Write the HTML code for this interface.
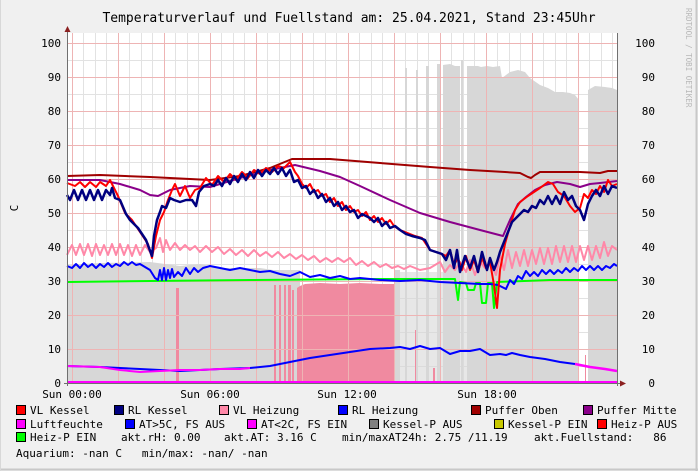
<!DOCTYPE html>
<html><head><meta charset="utf-8"><style>
html,body{margin:0;padding:0;background:#f0f0f0;}
svg{display:block;}
text{font-family:"DejaVu Sans Mono","Liberation Mono",monospace;fill:#000;white-space:pre;}
</style></head><body>
<svg width="698" height="471" viewBox="0 0 698 471" xmlns="http://www.w3.org/2000/svg" xml:space="preserve">
<rect x="0" y="0" width="698" height="471" fill="#f0f0f0"/>
<line x1="696.5" y1="0" x2="696.5" y2="471" stroke="#c8c8c8" stroke-width="2"/>
<line x1="0" y1="469.5" x2="698" y2="469.5" stroke="#c8c8c8" stroke-width="2"/>
<line x1="0.5" y1="0" x2="0.5" y2="471" stroke="#d8d8d8"/>
<rect x="67" y="33" width="550" height="350" fill="#fff"/>
<text x="349" y="22" font-size="13" text-anchor="middle">Temperaturverlauf und Fuellstand am: 25.04.2021, Stand 23:45Uhr</text>
<text x="686" y="8" font-size="7.5" style="fill:#b8b8b8" transform="rotate(90 686 8)">RRDTOOL / TOBI OETIKER</text>
<!-- minor grid -->
<g stroke="#e2e2e2" stroke-width="1">
<path d="M67 349.5H617M67 315.5H617M67 281.5H617M67 247.5H617M67 213.5H617M67 179.5H617M67 145.5H617M67 111.5H617M67 77.5H617M67 43.5H617" stroke="none"/>
<path d="M67 366.5H617M67 332.5H617M67 298.5H617M67 264.5H617M67 230.5H617M67 196.5H617M67 162.5H617M67 128.5H617M67 94.5H617M67 60.5H617"/>
<path d="M83.5 33V383M95.5 33V383M106.5 33V383M129.5 33V383M141.5 33V383M152.5 33V383M175.5 33V383M187.5 33V383M198.5 33V383M221.5 33V383M233.5 33V383M244.5 33V383M267.5 33V383M279.5 33V383M290.5 33V383M313.5 33V383M325.5 33V383M336.5 33V383M359.5 33V383M371.5 33V383M382.5 33V383M405.5 33V383M417.5 33V383M428.5 33V383M451.5 33V383M463.5 33V383M474.5 33V383M497.5 33V383M509.5 33V383M520.5 33V383M543.5 33V383M555.5 33V383M566.5 33V383M589.5 33V383M601.5 33V383M612.5 33V383"/>
</g>
<!-- grey fill -->
<g fill="#d7d7d7">
<path d="M67 383V265L100 263L150 262L180 266L200 264L220 268L260 268L273 270V383Z"/>
<path d="M273 383V270H300V383Z"/>
<rect x="395" y="270" width="5" height="113"/>
<rect x="405" y="68" width="2" height="315"/>
<rect x="416" y="70" width="2" height="313"/>
<rect x="426" y="66" width="3" height="317"/>
<rect x="437" y="64" width="3" height="319"/>
<path d="M443 383V65L450 64L455 66L460 66V383Z"/>
<rect x="461" y="60" width="2" height="323"/>
<path d="M467 383V66L478 66L481 67L487 66L493 67L500 66L502 78L510 72L518 70L525 72L530 78L540 85L548 88L555 92L563 92L570 93L575 95L579 100V383Z"/>
<path d="M588 383V90L595 86L605 87L612 88L617 90V383Z"/>
<rect x="400" y="272" width="67" height="111" opacity="0.6"/>
</g>
<!-- pink fill -->
<g fill="#f08aa0">
<path d="M297 383V288L300 286L305 284L320 283L340 284L360 283L380 284L395 284V383Z"/>
<rect x="176" y="288" width="3" height="95"/>
<rect x="274" y="285" width="2" height="98"/>
<rect x="279" y="285" width="2" height="98"/>
<rect x="284" y="285" width="2" height="98"/>
<rect x="288" y="285" width="3" height="98"/>
<rect x="292" y="290" width="2" height="93"/>
<rect x="415" y="330" width="1" height="53"/>
<rect x="433" y="368" width="2" height="15"/>
<rect x="585" y="355" width="1" height="28"/>
</g>
<!-- major grid -->
<g stroke="#eeb4b4" stroke-width="1">
<path d="M67 349.5H617M67 315.5H617M67 281.5H617M67 247.5H617M67 213.5H617M67 179.5H617M67 145.5H617M67 111.5H617M67 77.5H617M67 43.5H617"/>
<path d="M72.5 33V383M118.5 33V383M164.5 33V383M210.5 33V383M256.5 33V383M302.5 33V383M348.5 33V383M394.5 33V383M440.5 33V383M486.5 33V383M532.5 33V383M578.5 33V383"/>
</g>
<!-- lines -->
<g fill="none" stroke-linejoin="round">
<polyline stroke="#ff88a8" stroke-width="2" points="67,255 72,245 76,255 80,244 84,255 88,244 92,256 96,244 100,255 104,245 108,255 112,244 116,255 120,244 124,255 128,245 132,256 136,245 140,255 145,245 150,252 156,248 160,238 163,252 166,240 170,250 175,243 180,250 185,245 190,250 195,246 200,252 206,246 212,252 218,247 224,254 230,249 236,255 242,250 248,256 254,250 260,256 266,252 272,257 278,252 284,258 290,254 296,259 302,255 308,260 314,256 320,262 326,258 332,262 338,258 344,262 350,258 356,265 362,261 368,266 374,262 380,267 386,264 392,268 398,266 404,269 410,266 420,270 430,268 440,262 445,272 450,265 455,270 460,262 466,272 470,260 475,275 480,262 485,268 490,262 496,275 500,255 504,270 508,250 512,268 516,252 520,266 524,250 528,266 532,250 536,264 540,248 544,264 548,248 552,264 556,246 560,262 564,246 568,262 572,246 576,262 580,246 584,260 588,246 592,260 596,246 600,258 604,242 608,256 612,246 617,250"/>
<polyline stroke="#00ff00" stroke-width="2" points="67,282 150,281 250,280 380,279 455,279 458,300 460,282 466,283 468,290 474,290 476,283 480,283 482,303 486,303 488,283 492,283 494,308 497,282 550,280 617,280"/>
<polyline stroke="#0000ff" stroke-width="2" points="67,266 72,268 76,264 80,268 84,263 88,267 92,264 96,268 100,264 104,267 108,263 112,267 116,264 120,266 124,262 128,265 132,262 136,265 140,264 150,270 155,278 158,280 160,270 162,280 164,268 166,280 168,270 170,278 172,269 174,277 178,272 182,276 186,268 190,274 194,268 198,272 203,268 210,266 220,268 230,270 240,268 250,270 260,272 270,271 280,274 290,276 300,272 310,277 320,275 330,278 340,276 350,279 360,278 370,279 380,280 400,281 420,280 440,282 460,283 480,284 490,284 498,285 506,289 510,280 514,284 518,276 522,279 526,271 530,276 534,272 538,276 542,270 546,274 550,270 554,274 558,270 562,273 566,268 570,272 574,268 578,271 582,266 586,270 590,266 594,270 598,266 602,270 606,266 610,268 614,264 617,266"/>
<polyline stroke="#a00000" stroke-width="2" points="67,176 100,175 150,177 210,180 240,176 270,168 292,159 330,159 380,163 430,167 470,170 505,172 520,173 528,177 531,178 535,175 540,172 560,172 580,172 600,173 608,171 617,171"/>
<polyline stroke="#8a008a" stroke-width="2" points="67,180 100,180 120,184 140,190 150,195 158,196 170,190 190,186 210,187 240,178 270,170 295,165 320,171 340,177 360,186 390,200 420,213 450,222 480,230 503,236 510,220 518,204 526,197 535,190 545,185 557,182 570,184 580,187 590,184 600,183 617,181"/>
<polyline stroke="#ff0000" stroke-width="2" points="67,183 75,186 80,182 85,187 90,182 96,187 100,182 106,186 110,180 118,196 125,213 132,220 140,232 148,244 152,258 156,236 160,220 164,212 168,200 172,190 175,184 180,196 185,186 190,198 195,190 200,188 206,178 212,185 218,176 224,182 230,174 236,180 242,172 248,178 254,170 260,174 266,168 272,172 278,166 284,168 290,162 295,172 298,176 302,184 306,188 310,184 314,192 318,190 322,196 326,194 330,202 334,198 338,206 342,202 346,210 350,206 354,212 358,210 362,216 366,212 370,220 374,216 378,222 382,218 386,224 390,220 394,226 400,230 405,232 415,236 422,238 426,244 430,250 436,252 442,254 446,256 450,250 454,265 458,258 462,270 466,256 470,270 474,260 478,272 482,258 486,268 490,262 494,285 497,308 500,270 505,244 510,226 515,210 520,202 528,196 540,188 548,182 553,184 558,192 564,196 570,206 575,212 580,208 584,194 588,198 592,190 596,194 600,186 604,192 608,180 612,186 617,184"/>
<polyline stroke="#000080" stroke-width="2.5" points="67,195 70,200 74,190 78,200 82,190 86,200 90,190 94,200 98,190 102,200 106,190 110,195 112,188 115,198 120,200 126,214 130,220 138,228 146,240 152,256 154,236 157,220 160,212 162,206 166,208 170,198 174,200 180,202 186,200 192,200 196,206 199,192 204,186 210,184 214,186 218,180 222,186 226,178 230,184 234,176 238,182 242,174 246,180 250,172 254,178 258,170 262,176 266,170 270,174 274,168 278,174 282,168 286,176 290,170 294,182 298,180 302,188 306,186 310,194 314,190 318,198 322,194 326,202 330,198 334,206 338,202 342,210 346,206 350,212 354,210 358,218 362,214 370,218 374,222 378,218 382,226 386,222 390,228 395,226 400,230 406,234 412,236 420,238 425,240 430,250 436,252 442,254 446,260 450,250 454,268 457,250 460,272 465,256 470,268 474,256 478,272 482,252 487,270 490,258 494,270 497,262 500,252 504,242 508,232 512,222 516,218 520,214 524,210 528,212 532,206 536,208 540,200 544,204 548,196 552,204 556,196 560,204 564,192 568,200 572,196 576,206 580,210 584,220 588,204 592,196 596,190 600,196 604,186 608,194 612,186 617,188"/>
<polyline stroke="#0000ff" stroke-width="2" points="67,366 100,367 140,369 180,371 220,369 250,368 270,366 290,362 310,358 330,355 350,352 370,349 390,348 400,347 410,349 420,346 430,349 440,348 450,354 460,351 470,351 480,349 490,355 500,354 506,355 512,353 520,355 530,357 545,359 560,362 575,364"/>
<polyline stroke="#ff00ff" stroke-width="2" points="67,366 100,367 120,370 140,372 160,371 180,370 200,370 220,369 240,369 250,368"/>
<polyline stroke="#ff00ff" stroke-width="2.5" points="575,364 590,367 605,369 617,371"/>
<line x1="67" y1="382" x2="617" y2="382" stroke="#ff00ff" stroke-width="2"/>
</g>
<!-- axes -->
<g stroke="#707070" stroke-width="1">
<line x1="67.5" y1="30" x2="67.5" y2="386"/>
<line x1="64" y1="383.5" x2="622" y2="383.5"/>
<line x1="617.5" y1="33" x2="617.5" y2="386"/>
</g>
<path d="M64.5 32L67.5 26L70.5 32Z" fill="#8b2020"/>
<path d="M620 380.5L626 383.5L620 386.5Z" fill="#8b2020"/>
<!-- y labels -->
<g font-size="11" text-anchor="end">
<text x="61" y="47">100</text><text x="61" y="81">90</text><text x="61" y="115">80</text><text x="61" y="149">70</text><text x="61" y="183">60</text><text x="61" y="217">50</text><text x="61" y="251">40</text><text x="61" y="285">30</text><text x="61" y="319">20</text><text x="61" y="353">10</text><text x="61" y="387">0</text>
<text x="655" y="47">100</text><text x="655" y="81">90</text><text x="655" y="115">80</text><text x="655" y="149">70</text><text x="655" y="183">60</text><text x="655" y="217">50</text><text x="655" y="251">40</text><text x="655" y="285">30</text><text x="655" y="319">20</text><text x="655" y="353">10</text><text x="655" y="387">0</text>
</g>
<text x="18" y="208" font-size="11" text-anchor="middle" transform="rotate(-90 18 208)">C</text>
<g font-size="11" text-anchor="middle">
<text x="72" y="398">Sun 00:00</text><text x="210" y="398">Sun 06:00</text><text x="347" y="398">Sun 12:00</text><text x="487" y="398">Sun 18:00</text>
</g>
<!-- legend -->
<g stroke="#000" stroke-width="1">
<rect x="16.5" y="405.5" width="9" height="9" fill="#ff0000"/>
<rect x="114.5" y="405.5" width="9" height="9" fill="#000080"/>
<rect x="219.5" y="405.5" width="9" height="9" fill="#ff88a8"/>
<rect x="338.5" y="405.5" width="9" height="9" fill="#0000ff"/>
<rect x="471.5" y="405.5" width="9" height="9" fill="#a00000"/>
<rect x="583.5" y="405.5" width="9" height="9" fill="#8a008a"/>
<rect x="16.5" y="419.5" width="9" height="9" fill="#ff00ff"/>
<rect x="125.5" y="419.5" width="9" height="9" fill="#0000ff"/>
<rect x="247.5" y="419.5" width="9" height="9" fill="#ff00ff"/>
<rect x="369.5" y="419.5" width="9" height="9" fill="#808080"/>
<rect x="494.5" y="419.5" width="9" height="9" fill="#c8c800"/>
<rect x="597.5" y="419.5" width="9" height="9" fill="#ff0000"/>
<rect x="16.5" y="432.5" width="9" height="9" fill="#00ff00"/>
</g>
<g font-size="11">
<text x="30" y="414">VL Kessel</text><text x="128" y="414">RL Kessel</text><text x="233" y="414">VL Heizung</text><text x="352" y="414">RL Heizung</text><text x="485" y="414">Puffer Oben</text><text x="597" y="414">Puffer Mitte</text>
<text x="30" y="428">Luftfeuchte</text><text x="139" y="428">AT&gt;5C, FS AUS</text><text x="261" y="428">AT&lt;2C, FS EIN</text><text x="383" y="428">Kessel-P AUS</text><text x="508" y="428">Kessel-P EIN</text><text x="611" y="428">Heiz-P AUS</text>
<text x="30" y="441">Heiz-P EIN</text><text x="121" y="441">akt.rH: 0.00</text><text x="224" y="441">akt.AT: 3.16 C</text><text x="342" y="441">min/maxAT24h: 2.75 /11.19</text><text x="534" y="441">akt.Fuellstand:   86</text>
<text x="16" y="457">Aquarium: -nan C   min/max: -nan/ -nan</text>
</g>
</svg>
</body></html>
